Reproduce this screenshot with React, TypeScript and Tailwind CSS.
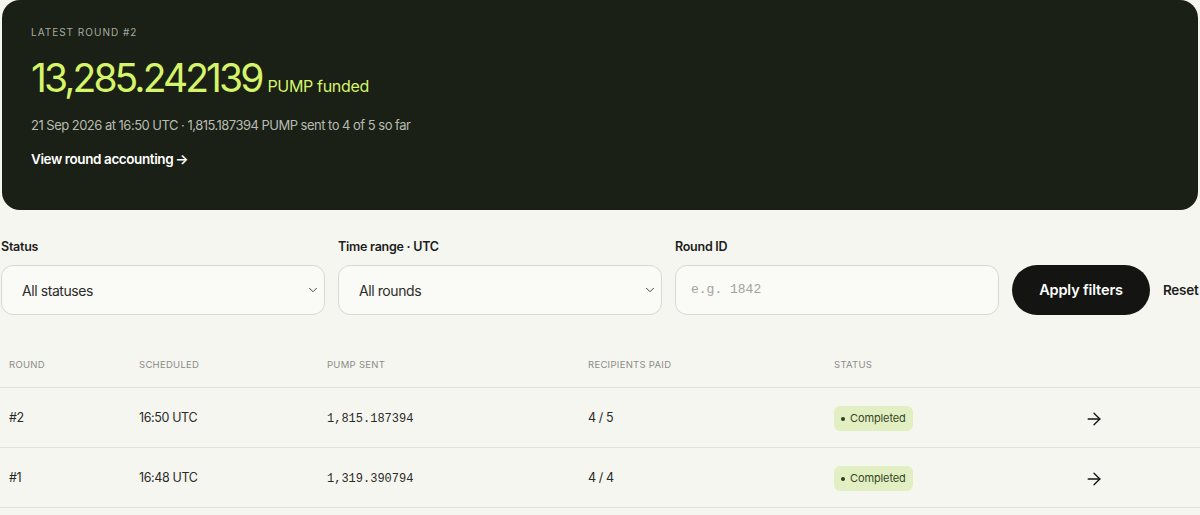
import React from "react";
import { ArrowRight, ChevronDown } from "lucide-react";

const sans = { fontFamily: "Inter, 'Noto Sans', sans-serif" };
const mono = { fontFamily: "'Liberation Mono', 'DejaVu Sans Mono', monospace" };

type Row = { round: string; time: string; sent: string; paid: string };

const rows: Row[] = [
  { round: "#2", time: "16:50 UTC", sent: "1,815.187394", paid: "4 / 5" },
  { round: "#1", time: "16:48 UTC", sent: "1,319.390794", paid: "4 / 4" },
];

function Field({ label, children }: { label: string; children: React.ReactNode }) {
  return (
    <div className="flex w-[324px] shrink-0 flex-col">
      <div className="mb-[10px] text-[12.5px] font-semibold leading-[16px] tracking-[-0.02em] text-[#1c1c1a]">
        {label}
      </div>
      {children}
    </div>
  );
}

function SelectBox({ value }: { value: string }) {
  return (
    <div className="flex h-[50px] items-center justify-between rounded-[12px] border border-[#d9d9d2] bg-[#fafaf7] pl-[20px] pr-[2px]">
      <span className="text-[14px] tracking-[-0.03em] text-[#2c2c29]">{value}</span>
      <ChevronDown size={14} strokeWidth={1.6} className="mr-[2px] text-[#3a3a36]" />
    </div>
  );
}

function Badge() {
  return (
    <span className="inline-flex h-[25px] items-center gap-[5px] rounded-[6px] bg-[#e2efc3] px-[7px] text-[11px] tracking-[-0.01em] text-[#37461f]">
      <span className="h-[4px] w-[4px] rounded-full bg-[#2e3b1a]" />
      Completed
    </span>
  );
}

export default function App() {
  const cols = "grid grid-cols-[130px_188px_261px_246px_252px_1fr]";
  return (
    <div className="h-[515px] w-[1200px] overflow-hidden bg-[#f6f6f1]" style={sans}>
      <section className="ml-[2px] h-[210px] w-[1196px] rounded-[18px] bg-[#1a2016] pl-[29px] pt-[26px]">
        <div className="text-[10px] uppercase leading-[13px] tracking-[0.1em] text-[#a7aba0]">Latest round #2</div>
        <div className="mt-[13px] flex items-baseline gap-[6px] text-[#d6f46a]">
          <span className="text-[39px] leading-[52px] tracking-[-0.075em]">13,285.242139</span>
          <span className="text-[16px] tracking-[-0.02em]">PUMP funded</span>
        </div>
        <div className="mt-[11px] text-[13px] leading-[20px] tracking-[-0.04em] text-[#b8bbb1]">
          21 Sep 2026 at 16:50 UTC · 1,815.187394 PUMP sent to 4 of 5 so far
        </div>
        <div className="mt-[14px] flex items-center gap-[2px] text-[13.5px] font-semibold leading-[20px] tracking-[-0.03em] text-white">
          View round accounting
          <span className="text-[14px]">→</span>
        </div>
      </section>

      <div className="ml-[1px] mt-[29px] flex items-end gap-[13px]">
        <Field label="Status">
          <SelectBox value="All statuses" />
        </Field>
        <Field label="Time range · UTC">
          <SelectBox value="All rounds" />
        </Field>
        <Field label="Round ID">
          <div className="flex h-[50px] items-center rounded-[12px] border border-[#d9d9d2] bg-[#fafaf7] pl-[15px]">
            <span className="text-[13px] text-[#a3a39c]" style={mono}>
              e.g. 1842
            </span>
          </div>
        </Field>
        <button className="h-[50px] w-[138px] shrink-0 rounded-full bg-[#141412] text-[14.5px] font-semibold tracking-[-0.01em] text-white">
          Apply filters
        </button>
        <span className="flex h-[50px] shrink-0 items-center whitespace-nowrap text-[13.5px] font-semibold tracking-[-0.02em] text-[#1c1c1a]">
          Reset
        </span>
      </div>

      <div className="mt-[27px] w-[1200px]">
        <div className={`${cols} h-[46px] items-center border-b border-[#e2e2dc] pt-[2px] text-[9.5px] uppercase tracking-[0.03em] text-[#8b8b85]`}>
          <div className="pl-[9px]">Round</div>
          <div className="pl-[9px]">Scheduled</div>
          <div className="pl-[9px]">Pump sent</div>
          <div className="pl-[9px]">Recipients paid</div>
          <div className="pl-[9px]">Status</div>
          <div />
        </div>
        {rows.map((r) => (
          <div
            key={r.round}
            className={`${cols} h-[60px] items-center border-b border-[#e2e2dc] pt-[2px] text-[12.5px] tracking-[-0.03em] text-[#2a2a27]`}
          >
            <div className="pl-[9px]">{r.round}</div>
            <div className="pl-[9px]">{r.time}</div>
            <div className="pl-[9px] text-[12px] tracking-normal" style={mono}>
              {r.sent}
            </div>
            <div className="pl-[9px]">{r.paid}</div>
            <div className="pl-[9px]">
              <Badge />
            </div>
            <div className="pl-[7px]">
              <ArrowRight size={20} strokeWidth={1.6} className="text-[#151513]" />
            </div>
          </div>
        ))}
      </div>
    </div>
  );
}
